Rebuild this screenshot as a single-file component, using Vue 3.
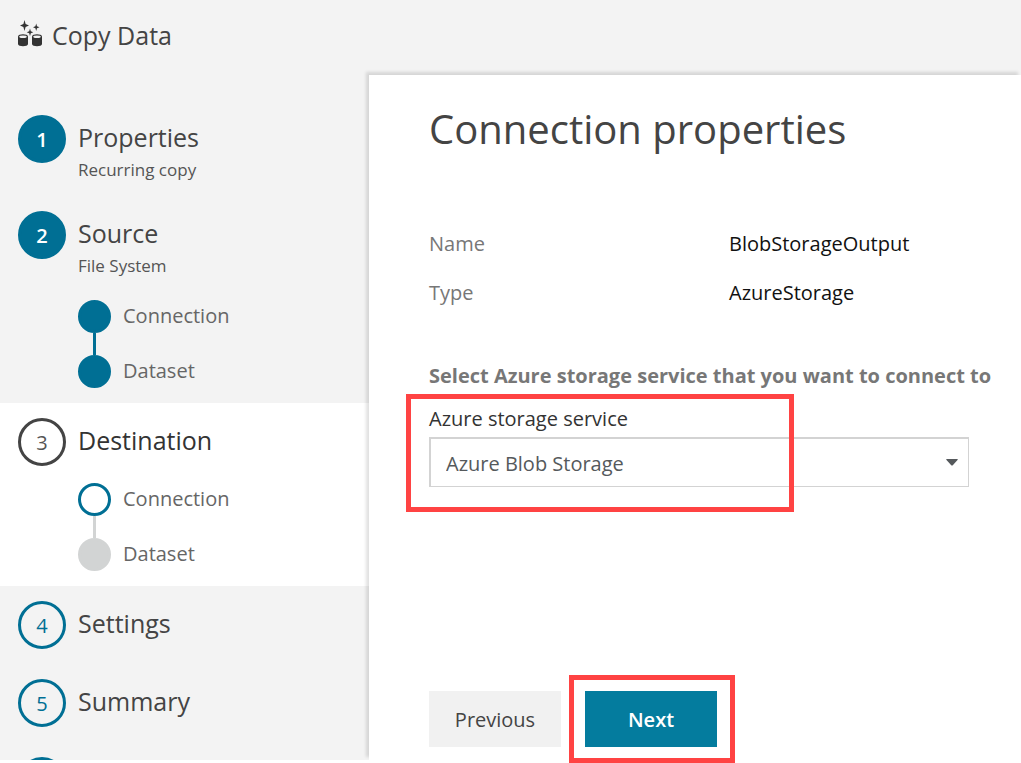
<script setup>
import { ref } from 'vue'

const service = ref('Azure Blob Storage')

const steps = [
  { n: 1, title: 'Properties', caption: 'Recurring copy', state: 'done' },
  {
    n: 2,
    title: 'Source',
    caption: 'File System',
    state: 'done',
    children: [
      { label: 'Connection', state: 'done' },
      { label: 'Dataset', state: 'done' },
    ],
  },
  {
    n: 3,
    title: 'Destination',
    state: 'active',
    children: [
      { label: 'Connection', state: 'current' },
      { label: 'Dataset', state: 'pending' },
    ],
  },
  { n: 4, title: 'Settings', state: 'todo' },
  { n: 5, title: 'Summary', state: 'todo' },
  { state: 'todo' },
]
</script>

<template>
  <div class="wizard">
    <header class="topbar">
      <svg class="logo" viewBox="0 0 26 30" aria-hidden="true">
        <g fill="#333">
          <path d="M7.500 0 L8.600 4 L12 5.500 L8.600 7 L7.500 11 L6.400 7 L3 5.500 L6.400 4 Z" />
          <path d="M19.200 3.500 L20 6.200 L22.500 7.200 L20 8.200 L19.200 11 L18.400 8.200 L16 7.200 L18.400 6.200 Z" />
          <path d="M13 8.500 L13.800 11.200 L16.300 12.200 L13.800 13.200 L13 16 L12.200 13.200 L9.700 12.200 L12.200 11.200 Z" />
          <path d="M1 16.500 C1 13.500 11 13.500 11 16.500 V24 C11 27 1 27 1 24 Z" />
          <path d="M15 16.500 C15 13.500 25 13.500 25 16.500 V24 C25 27 15 27 15 24 Z" />
        </g>
        <ellipse cx="6" cy="16.800" rx="3.800" ry="1.300" fill="#f3f3f3" />
        <ellipse cx="20" cy="16.800" rx="3.800" ry="1.300" fill="#f3f3f3" />
      </svg>
      <span class="app-name">Copy Data</span>
    </header>

    <div class="body">
      <nav class="sidebar" aria-label="Steps">
        <section
          v-for="(step, i) in steps"
          :key="i"
          class="step"
          :class="[step.state, { captioned: step.caption && !step.children }]"
        >
          <div class="step-head">
            <span class="circle">{{ step.n }}</span>
            <div v-if="step.title" class="step-text">
              <div class="step-title">{{ step.title }}</div>
              <div v-if="step.caption" class="step-caption">{{ step.caption }}</div>
            </div>
          </div>
          <ul v-if="step.children" class="substeps">
            <li v-for="child in step.children" :key="child.label" class="substep" :class="child.state">
              <span class="dot"></span>
              <span class="substep-label">{{ child.label }}</span>
            </li>
          </ul>
        </section>
      </nav>

      <main class="panel">
        <h1 class="heading">Connection properties</h1>

        <dl class="facts">
          <dt>Name</dt>
          <dd>BlobStorageOutput</dd>
          <dt>Type</dt>
          <dd>AzureStorage</dd>
        </dl>

        <h2 class="prompt">Select Azure storage service that you want to connect to</h2>

        <div class="field">
          <label class="field-label" for="service">Azure storage service</label>
          <div class="select-wrap">
            <select id="service" v-model="service" class="select">
              <option>Azure Blob Storage</option>
            </select>
            <svg class="arrow" viewBox="0 0 12 7" aria-hidden="true">
              <path d="M1 0 H11 Q12.500 0 11.500 1 L7 6 Q6 7 5 6 L0.500 1 Q-0.500 0 1 0 Z" fill="#55595c" />
            </svg>
          </div>
          <span class="callout callout-field"></span>
        </div>

        <footer class="actions">
          <button class="btn" type="button">Previous</button>
          <div class="next-wrap">
            <button class="btn primary" type="button">Next</button>
            <span class="callout callout-next"></span>
          </div>
        </footer>
      </main>
    </div>
  </div>
</template>

<style>
body {
  margin: 0;
  background: #fff;
}
</style>

<style scoped>
.wizard {
  display: flex;
  flex-direction: column;
  box-sizing: border-box;
  height: 100vh;
  padding-bottom: 3px;
  background: #fff;
  color: #444;
  font-family: "Segoe UI", "Open Sans", "Noto Sans", sans-serif;
  font-size: 20px;
}

.topbar {
  display: flex;
  align-items: center;
  gap: 9px;
  box-sizing: border-box;
  flex: none;
  height: 75px;
  padding: 0 17px 6px;
  background: #f3f3f3;
}

.logo {
  width: 26px;
  height: 30px;
}

.app-name {
  font-size: 25px;
  line-height: 32px;
}

.body {
  display: flex;
  flex: 1;
  min-height: 0;
}

.sidebar {
  flex: none;
  width: 369px;
  box-sizing: border-box;
  padding-top: 25px;
  overflow: hidden;
  background: #f3f3f3;
}

.step {
  padding: 15px 18px;
}

.step.captioned {
  padding-bottom: 9px;
}

.step.active {
  background: #fff;
}

.step-head {
  display: flex;
  gap: 12px;
}

.circle {
  box-sizing: border-box;
  flex: none;
  width: 48px;
  height: 48px;
  border: 3px solid #006f94;
  border-radius: 50%;
  color: #006f94;
  font-size: 20px;
  line-height: 44px;
  text-align: center;
}

.done .circle {
  background: #006f94;
  color: #fff;
  font-weight: 600;
}

.active .circle {
  border-color: #444;
  color: #555;
}

.step-title {
  font-size: 25px;
  line-height: 44px;
}

.active .step-title {
  color: #333;
}

.step-caption {
  padding: 2px 0 8px;
  color: #555;
  font-size: 17px;
  line-height: 18px;
}

.substeps {
  display: flex;
  flex-direction: column;
  gap: 22px;
  margin: 17px 0 0 60px;
  padding: 0;
  list-style: none;
}

.substep {
  position: relative;
  display: flex;
  align-items: flex-start;
  gap: 12px;
  height: 33px;
  color: #666;
}

.dot {
  box-sizing: border-box;
  width: 33px;
  height: 33px;
  border: 3px solid #006f94;
  border-radius: 50%;
  background: #006f94;
}

.current .dot {
  background: #fff;
}

.pending .dot {
  border-color: #d2d4d4;
  background: #d2d4d4;
}

.substep + .substep::before {
  position: absolute;
  bottom: 100%;
  left: 15px;
  width: 3px;
  height: 22px;
  background: #006f94;
  content: "";
}

.substep.pending::before {
  background: #d2d4d4;
}

.substep-label {
  line-height: 32px;
}

.panel {
  position: relative;
  display: flex;
  flex: 1;
  flex-direction: column;
  min-width: 0;
  padding: 0 24px 13px 60px;
  background: #fff;
  box-shadow: -3px -3px 3px rgba(0, 0, 0, 0.12);
}

.heading {
  margin: 26px 0 0;
  font-size: 40px;
  font-weight: 400;
  line-height: 56px;
  white-space: nowrap;
}

.facts {
  display: grid;
  grid-template-columns: 300px 1fr;
  row-gap: 19px;
  margin: 72px 0 0;
  line-height: 30px;
}

.facts dt {
  color: #777;
}

.facts dd {
  margin: 0;
  color: #111;
}

.prompt {
  margin: 53px 0 0;
  color: #777;
  font-size: 20px;
  font-weight: 700;
  line-height: 30px;
  white-space: nowrap;
}

.field {
  position: relative;
  margin-top: 13px;
}

.field-label {
  display: block;
  color: #333;
  line-height: 30px;
}

.select-wrap {
  position: relative;
  margin-top: 3px;
  max-width: 540px;
}

.select {
  box-sizing: border-box;
  display: block;
  width: 100%;
  height: 50px;
  padding: 2px 40px 0 15px;
  border: 1px solid #d3d3d3;
  border-top-width: 2px;
  border-left-width: 2px;
  border-radius: 0;
  background: #fff;
  color: #55595c;
  font: inherit;
  appearance: none;
}

.arrow {
  position: absolute;
  top: 22px;
  right: 11px;
  width: 12px;
  height: 7px;
  pointer-events: none;
}

.callout {
  position: absolute;
  box-sizing: border-box;
  border: 5px solid #ff4343;
  pointer-events: none;
}

.callout-field {
  top: -10px;
  left: -23px;
  width: 388px;
  height: 118px;
}

.callout-next {
  inset: -16px -18px -16px -16px;
}

.actions {
  display: flex;
  gap: 24px;
  margin-top: auto;
}

.next-wrap {
  position: relative;
}

.btn {
  display: block;
  width: 132px;
  height: 56px;
  padding: 0;
  border: 0;
  background: #f1f1f1;
  color: #444;
  font: inherit;
  font-weight: 500;
}

.btn.primary {
  background: #047c9e;
  color: #fff;
  font-weight: 600;
}
</style>
